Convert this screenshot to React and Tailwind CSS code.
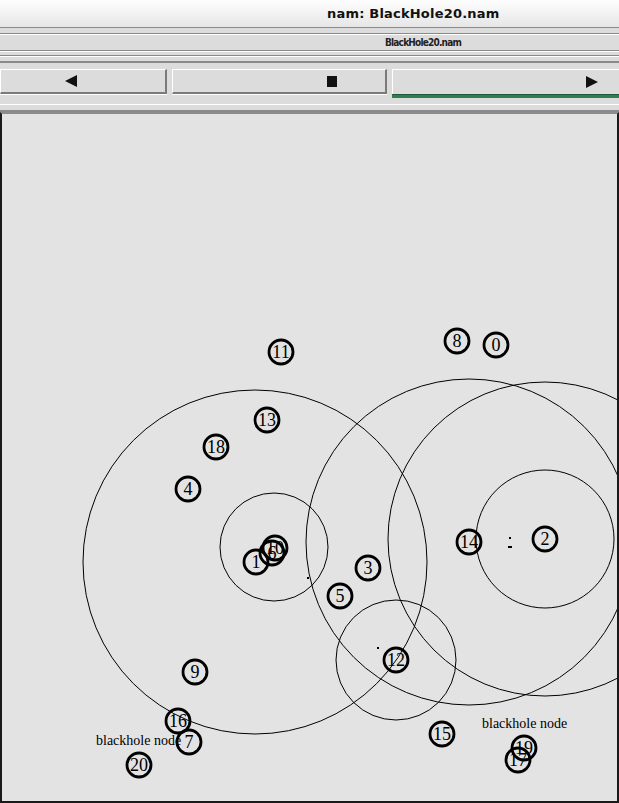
import React from "react";

const nodes = [
  { id: "11", x: 281, y: 352 },
  { id: "8", x: 457, y: 341 },
  { id: "0", x: 496, y: 345 },
  { id: "13", x: 267, y: 420 },
  { id: "18", x: 216, y: 447 },
  { id: "4", x: 188, y: 489 },
  { id: "14", x: 469, y: 542 },
  { id: "2", x: 545, y: 539 },
  { id: "3", x: 368, y: 568 },
  { id: "5", x: 340, y: 596 },
  { id: "12", x: 396, y: 660 },
  { id: "9", x: 195, y: 672 },
  { id: "15", x: 442, y: 734 },
  { id: "20", x: 139, y: 765 },
  { id: "1", x: 256, y: 562 },
  { id: "6", x: 272, y: 553 },
  { id: "10", x: 275, y: 548 },
  { id: "16", x: 178, y: 721 },
  { id: "7", x: 189, y: 742 },
  { id: "17", x: 518, y: 760 },
  { id: "19", x: 524, y: 748 },
];

const rings = [
  { x: 255, y: 562, r: 172 },
  { x: 274, y: 547, r: 54 },
  { x: 469, y: 542, r: 163 },
  { x: 545, y: 539, r: 157 },
  { x: 545, y: 539, r: 69 },
  { x: 396, y: 660, r: 60 },
];

function Canvas() {
  const top = 112;
  return (
    <div className="h-[691px] w-full border-l-2 border-r-2 border-b-2 border-[#1a1a1a] border-t-2 border-t-[#8c8c8c] bg-[#e3e3e3] overflow-hidden">
      <svg width="619" height="691" className="block -ml-[2px] -mt-[2px]">
        <g transform={`translate(0,${-top})`}>
          {rings.map((c, i) => (
            <circle key={i} cx={c.x} cy={c.y} r={c.r} fill="none" stroke="#000" strokeWidth="1" />
          ))}
          <rect x="509" y="537" width="2" height="2" fill="#000" />
          <rect x="508" y="546" width="4" height="2" fill="#000" />
          <rect x="307" y="577" width="2" height="2" fill="#000" />
          <rect x="377" y="647" width="2" height="2" fill="#000" />
          {nodes.map((n) => (
            <g key={n.id}>
              <circle cx={n.x} cy={n.y} r="12" fill="none" stroke="#000" strokeWidth="2.8" />
              <text
                x={n.x}
                y={n.y + 6}
                textAnchor="middle"
                fontFamily="'Liberation Serif', 'DejaVu Serif', serif"
                fontSize="18"
                fill="#000"
              >
                {n.id}
              </text>
            </g>
          ))}
          <text x="96" y="745" fontFamily="'Liberation Serif', 'DejaVu Serif', serif" fontSize="14" fill="#000">
            blackhole node
          </text>
          <text x="482" y="728" fontFamily="'Liberation Serif', 'DejaVu Serif', serif" fontSize="14" fill="#000">
            blackhole node
          </text>
        </g>
      </svg>
    </div>
  );
}

function Btn({ children, className }) {
  return (
    <div
      className={
        "h-[25px] flex items-center border-t border-l border-white border-b-2 border-r-2 border-b-[#7a7a7a] border-r-[#7a7a7a] bg-[#dcdcdc] " +
        className
      }
    >
      {children}
    </div>
  );
}

export default function App() {
  return (
    <div className="w-[619px] h-[803px] overflow-hidden bg-[#dcdcdc] flex flex-col" style={{ fontFamily: "'DejaVu Sans', sans-serif" }}>
      <div className="h-[27px] shrink-0 bg-gradient-to-b from-[#fefefe] to-[#e6e6e6] flex items-center pl-[327px]">
        <span className="text-[13px] font-bold text-[#111] tracking-[0.2px]">nam: BlackHole20.nam</span>
      </div>
      <div className="h-px bg-[#8a8a8a] shrink-0" />
      <div className="h-[5px] shrink-0" />
      <div className="h-px bg-[#8a8a8a] shrink-0" />
      <div className="h-px bg-white shrink-0" />
      <div className="h-[15px] shrink-0 flex items-center pl-[385px]">
        <span
          className="text-[10px] font-bold text-[#222] tracking-[-0.8px]"
          style={{ fontFamily: "'DejaVu Sans Condensed', 'Liberation Sans Narrow', 'Liberation Sans', sans-serif" }}
        >
          BlackHole20.nam
        </span>
      </div>
      <div className="h-px bg-[#8a8a8a] shrink-0" />
      <div className="h-px bg-white shrink-0" />
      <div className="h-[3px] shrink-0" />
      <div className="h-px bg-[#8a8a8a] shrink-0" />
      <div className="h-px bg-white shrink-0" />
      <div className="h-[4px] shrink-0" />
      <div className="h-[2px] bg-[#8a8a8a] shrink-0" />
      <div className="h-[6px] shrink-0" />
      <div className="h-[29px] shrink-0 flex gap-[5px] items-start">
        <div className="w-[167px] shrink-0 flex flex-col">
          <Btn className="pl-[64px]">
            <span className="w-0 h-0 border-t-[6px] border-b-[6px] border-r-[12px] border-t-transparent border-b-transparent border-r-[#111]" />
          </Btn>
          <div className="h-[1px] bg-white" />
        </div>
        <div className="w-[215px] shrink-0 flex flex-col">
          <Btn className="pl-[154px]">
            <span className="w-[10px] h-[11px] bg-[#111]" />
          </Btn>
          <div className="h-[1px] bg-white" />
        </div>
        <div className="flex-1 flex flex-col">
          <div className="h-[25px] flex items-center border-t border-l border-white bg-[#dcdcdc] pl-[193px]">
            <span className="w-0 h-0 border-t-[6px] border-b-[6px] border-l-[12px] border-t-transparent border-b-transparent border-l-[#111]" />
          </div>
          <div className="h-[4px] bg-[#2f7d52] border-t border-[#1f5a3a]" />
        </div>
      </div>
      <div className="h-[6px] shrink-0" />
      <div className="h-px bg-white shrink-0" />
      <div className="h-[5px] shrink-0" />
      <div className="h-[2px] bg-[#8a8a8a] shrink-0" />
      <Canvas />
    </div>
  );
}
